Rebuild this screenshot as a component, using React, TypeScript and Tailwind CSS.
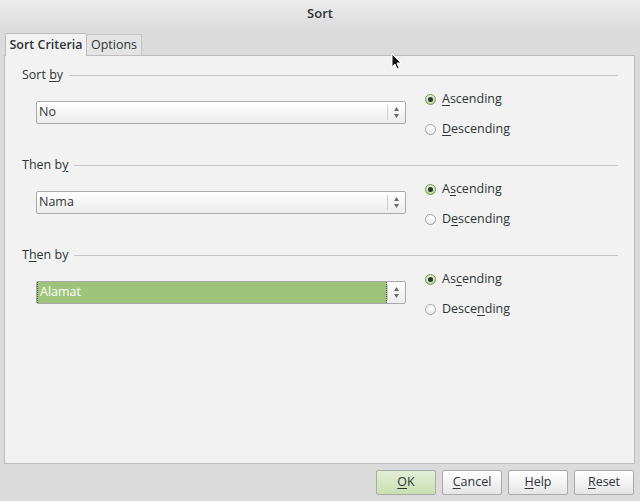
import React from 'react'

// mnemonic label: underline one letter by index
const Mn = ({ text, at }: { text: string; at: number }) => (
  <span>
    {text.slice(0, at)}
    <span className="underline underline-offset-2">{text[at]}</span>
    {text.slice(at + 1)}
  </span>
)

const Spinner = () => (
  <div className="flex w-[18px] items-center justify-center border-l border-[#cfcfcf] my-[3px]">
    <svg width="7" height="13" viewBox="0 0 7 13">
      <path d="M3.5 1 L6 5 L1 5 Z" fill="#6b6b6b" />
      <path d="M3.5 12 L6 8 L1 8 Z" fill="#6b6b6b" />
    </svg>
  </div>
)

const Combo = ({ value, selected }: { value: string; selected?: boolean }) => (
  <div className="mt-[17px] flex h-[23px] w-[370px] rounded-[2px] border border-[#a9a9a9] bg-gradient-to-b from-white to-[#ececec]">
    {selected ? (
      <div className="flex flex-1 items-center border-x border-dotted border-[#555] bg-[#9ec47b] pl-[2px] text-white">
        {value}
      </div>
    ) : (
      <div className="flex flex-1 items-center pl-[2px]">{value}</div>
    )}
    <Spinner />
  </div>
)

const Radio = ({ checked, children }: { checked?: boolean; children: React.ReactNode }) => (
  <div className="flex h-[30px] items-center gap-[6px]">
    {checked ? (
      <div className="flex h-[11px] w-[11px] items-center justify-center rounded-full border border-[#6f9a4a] bg-gradient-to-b from-[#e4f0d6] to-[#b9d69a]">
        <div className="h-[5px] w-[5px] rounded-full bg-[#2e3436]" />
      </div>
    ) : (
      <div className="h-[11px] w-[11px] rounded-full border border-[#a0a0a0] bg-gradient-to-b from-white to-[#ececec]" />
    )}
    {children}
  </div>
)

type Sec = {
  label: React.ReactNode
  value: string
  selected?: boolean
  asc: React.ReactNode
  desc: React.ReactNode
}

const sections: Sec[] = [
  { label: <Mn text="Sort by" at={5} />, value: 'No', asc: <Mn text="Ascending" at={0} />, desc: <Mn text="Descending" at={0} /> },
  { label: <Mn text="Then by" at={6} />, value: 'Nama', asc: <Mn text="Ascending" at={1} />, desc: <Mn text="Descending" at={1} /> },
  { label: <Mn text="Then by" at={1} />, value: 'Alamat', selected: true, asc: <Mn text="Ascending" at={2} />, desc: <Mn text="Descending" at={5} /> },
]

const Button = ({ children, primary }: { children: React.ReactNode; primary?: boolean }) => (
  <div
    className={`flex h-[25px] w-[60px] items-center justify-center rounded-[2px] border border-[#a9a9a9] ${
      primary ? 'bg-gradient-to-b from-[#e2eed6] to-[#c9e0b0]' : 'bg-gradient-to-b from-white to-[#e6e6e6]'
    }`}
  >
    {children}
  </div>
)

export default function App() {
  return (
    <div
      className="relative flex h-[501px] w-[640px] flex-col bg-[#dbdbdb] text-[12.5px] text-[#2e3436]"
      style={{ fontFamily: '"Open Sans", "DejaVu Sans", sans-serif' }}
    >
      {/* title bar */}
      <div className="flex h-[28px] items-center justify-center bg-gradient-to-b from-[#ececec] to-[#dcdcdc] text-[13px] font-semibold">
        Sort
      </div>

      {/* tabs */}
      <div className="flex h-[27px] items-end pl-[5px]">
        <div className="-mb-px z-10 flex h-[23px] w-[82px] items-center justify-center rounded-t-[2px] border border-b-0 border-[#bdbdbd] bg-[#f2f2f2] font-semibold">
          Sort Criteria
        </div>
        <div className="flex h-[21px] w-[55px] items-center justify-center rounded-t-[2px] border border-l-0 border-b-0 border-[#c4c4c4] bg-[#e4e4e4]">
          Options
        </div>
      </div>

      {/* panel */}
      <div className="ml-[4px] mr-[5px] flex h-[409px] flex-col border border-[#bdbdbd] bg-[#f2f2f2] pl-[17px] pt-[11px] pr-[16px]">
        {sections.map((s, i) => (
          <div key={i} className="flex h-[90px] flex-col">
            <div className="flex h-[16px] items-center gap-[6px]">
              <span>{s.label}</span>
              <div className="h-px flex-1 bg-[#c6c6c6]" />
            </div>
            <div className="mt-[1px] flex items-start pl-[14px]">
              <Combo value={s.value} selected={s.selected} />
              <div className="ml-[19px] flex flex-col">
                <Radio checked>{s.asc}</Radio>
                <Radio>{s.desc}</Radio>
              </div>
            </div>
          </div>
        ))}
      </div>

      {/* buttons */}
      <div className="flex justify-end gap-[6px] pr-[6px] pt-[6px]">
        <Button primary>
          <Mn text="OK" at={0} />
        </Button>
        <Button>
          <Mn text="Cancel" at={0} />
        </Button>
        <Button>
          <Mn text="Help" at={0} />
        </Button>
        <Button>
          <Mn text="Reset" at={0} />
        </Button>
      </div>

      {/* mouse pointer */}
      <svg className="absolute left-[391px] top-[53px]" width="11" height="17" viewBox="0 0 11 17">
        <path d="M1 1 L1 14 L4 11 L6 16 L8 15 L6 10 L10 10 Z" fill="#111" stroke="#fff" strokeWidth="1" />
      </svg>
    </div>
  )
}
